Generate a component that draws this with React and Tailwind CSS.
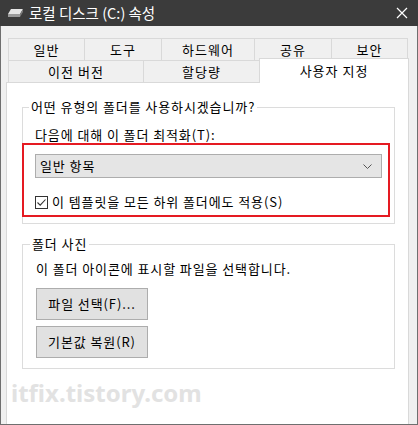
import React from 'react';

const font = { fontFamily: '"Noto Sans CJK KR", "Noto Sans", sans-serif' };

const DriveIcon = () => (
  <svg width="17" height="10" viewBox="0 0 17 10">
    <polygon points="4,1 16,1 13,6 1,6" fill="#e6e6e6" />
    <polygon points="1,6 13,6 13,9 1,9" fill="#9a9a9a" />
    <polygon points="13,6 16,1 16,4 13,9" fill="#7a7a7a" />
  </svg>
);

const CloseIcon = () => (
  <svg width="12" height="12" viewBox="0 0 12 12">
    <path d="M1 1 L11 11 M11 1 L1 11" stroke="#ffffff" strokeWidth="1.2" />
  </svg>
);

const Tab = ({ label, width, last }) => (
  <div
    className={`flex items-center justify-center border-t border-l border-[#d9d9d9] bg-[#f0f0f0] text-[13px] tracking-[1px] text-black ${
      last ? 'border-r' : ''
    }`}
    style={{ width }}
  >
    {label}
  </div>
);

export default function App() {
  return (
    <div className="w-[418px] h-[425px] flex flex-col bg-[#f0f0f0]" style={font}>
      {/* Title bar */}
      <div className="h-[26px] bg-[#3b3b3b] flex items-center pl-[7px] pr-[10px] shrink-0">
        <DriveIcon />
        <span className="ml-[5px] text-[14.5px] text-white leading-none">로컬 디스크 (C:) 속성</span>
        <div className="ml-auto">
          <CloseIcon />
        </div>
      </div>

      <div className="flex-1 flex flex-col border-x border-b border-[#6f6f6f] pl-[5px] pr-[8px] pt-[12px]">
        {/* Tabs */}
        <div className="ml-[2px] flex h-[22px]">
          <Tab label="일반" width={76} />
          <Tab label="도구" width={77} />
          <Tab label="하드웨어" width={93} />
          <Tab label="공유" width={77} />
          <Tab label="보안" width={77} last />
        </div>
        <div className="ml-[2px] flex h-[22px]">
          <Tab label="이전 버전" width={135} />
          <Tab label="할당량" width={116} />
          <div className="relative z-10 -mt-[2px] h-[25px] w-[150px] flex items-center justify-center border-x border-t border-[#d9d9d9] bg-white text-[13px] tracking-[1px] text-black">
            사용자 지정
          </div>
        </div>

        {/* Panel */}
        <div className="w-[403px] flex-1 border-x border-t border-[#d9d9d9] bg-white text-[13px] tracking-[0.9px] text-black">
          <fieldset className="ml-[15px] mt-[16px] w-[373px] border border-[#dcdcdc] pb-[6px]">
            <legend className="ml-[6px] px-[2px] leading-[16px]">어떤 유형의 폴더를 사용하시겠습니까?</legend>
            <div className="ml-[12px] mt-[12px] leading-[16px]">다음에 대해 이 폴더 최적화(T):</div>
            <div className="-ml-[1px] w-[368px] border-2 border-[#e51a22] pt-[9px] pb-[5px]">
              <div className="ml-[11px] w-[347px] h-[24px] flex items-center justify-between border border-[#adadad] bg-[#e5e5e5] pl-[4px] pr-[9px]">
                <span>일반 항목</span>
                <svg width="9" height="5" viewBox="0 0 9 5">
                  <path d="M0.5 0.5 L4.5 4.5 L8.5 0.5" stroke="#555" fill="none" />
                </svg>
              </div>
              <div className="ml-[11px] mt-[16px] flex items-center">
                <div className="w-[13px] h-[13px] border border-[#333] flex items-center justify-center bg-white">
                  <svg width="11" height="11" viewBox="0 0 11 11">
                    <path d="M1.5 5.5 L4.2 8.2 L9.5 2.5" stroke="#333" strokeWidth="1.1" fill="none" />
                  </svg>
                </div>
                <span className="ml-[4px] leading-[16px]">이 템플릿을 모든 하위 폴더에도 적용(S)</span>
              </div>
            </div>
          </fieldset>

          <fieldset className="ml-[15px] mt-[12px] w-[373px] border border-[#dcdcdc] pb-[10px]">
            <legend className="ml-[7px] px-[2px] leading-[16px]">폴더 사진</legend>
            <div className="ml-[13px] mt-[9px] leading-[16px]">이 폴더 아이콘에 표시할 파일을 선택합니다.</div>
            <div className="ml-[13px] mt-[11px] flex flex-col gap-[6px]">
              <button className="w-[112px] h-[32px] border border-[#adadad] bg-[#e1e1e1] text-[13px] tracking-[0.9px]">
                파일 선택(F)...
              </button>
              <button className="w-[112px] h-[32px] border border-[#adadad] bg-[#e1e1e1] text-[13px] tracking-[0.9px]">
                기본값 복원(R)
              </button>
            </div>
          </fieldset>

          <div
            className="ml-[4px] mt-[10px] text-[24px] font-bold leading-[28px] tracking-normal text-[#e2e2e2]"
            style={{ fontFamily: '"Noto Sans", sans-serif' }}
          >
            itfix.tistory.com
          </div>
        </div>
      </div>
    </div>
  );
}
